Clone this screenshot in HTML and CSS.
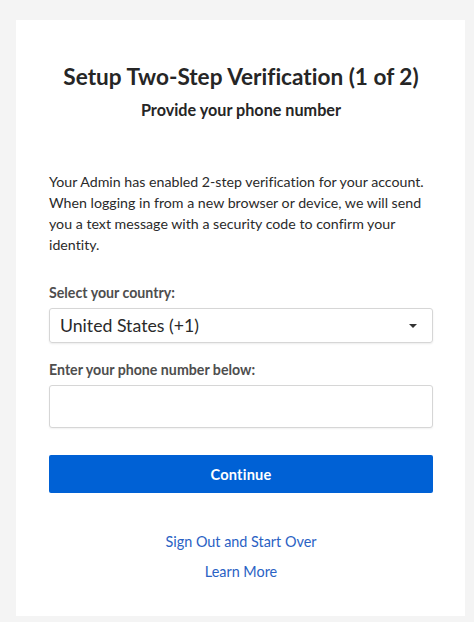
FILE: index.html
```html
<!DOCTYPE html>
<html lang="en">
<head>
<meta charset="utf-8">
<title>Setup Two-Step Verification</title>
<link rel="stylesheet" href="styles.css">
</head>
<body>
<main class="card">
  <h1 class="title">Setup Two-Step Verification (1 of 2)</h1>
  <h2 class="subtitle">Provide your phone number</h2>
  <p class="intro">Your Admin has enabled 2-step verification for your account. When logging in from a new browser or device, we will send you a text message with a security code to confirm your identity.</p>
  <label class="label label-country">Select your country:</label>
  <div class="select">
    <span class="select-value">United States (+1)</span>
    <span class="caret"></span>
  </div>
  <label class="label label-phone" for="phone">Enter your phone number below:</label>
  <input class="phone" id="phone" type="tel">
  <button class="continue" type="button">Continue</button>
  <nav class="links">
    <a class="link" href="#">Sign Out and Start Over</a>
    <a class="link" href="#">Learn More</a>
  </nav>
</main>
</body>
</html>
```
FILE: styles.css
```css
* { box-sizing: border-box; }
html, body { margin: 0; padding: 0; }
body {
  background: #f4f4f4;
  font-family: Lato, "Noto Sans", sans-serif;
  font-variant-ligatures: none;
  color: #222;
  padding: 20px 9px 6px 16px;
}
.card {
  background: #fff;
  width: 449px;
  height: 596px;
  padding: 44px 32px 0 33px;
  display: flex;
  flex-direction: column;
}
.title {
  margin: 0;
  font-size: 22.6px;
  line-height: 26px;
  font-weight: 700;
  text-align: center;
  color: #262626;
}
.subtitle {
  margin: 10px 0 0;
  font-size: 16.2px;
  line-height: 20px;
  font-weight: 700;
  text-align: center;
  color: #262626;
}
.intro {
  margin: 51px 0 0;
  font-size: 14.2px;
  line-height: 21px;
  color: #2a2a2a;
}
.label {
  display: block;
  font-size: 14.2px;
  line-height: 20px;
  font-weight: 700;
  color: #4e4e4e;
}
.label-country { margin-top: 28px; }
.label-phone { margin-top: 17px; }
.select {
  margin-top: 5px;
  height: 35px;
  border: 1px solid #d6d6d6;
  border-radius: 3px;
  box-shadow: 0 1px 2px rgba(0,0,0,0.08);
  display: flex;
  align-items: center;
  justify-content: space-between;
  padding: 0 15px 0 10px;
}
.select-value {
  font-size: 17.7px;
  color: #2a2a2a;
}
.caret {
  width: 0;
  height: 0;
  border-left: 4px solid transparent;
  border-right: 4px solid transparent;
  border-top: 4px solid #333;
}
.phone {
  margin-top: 5px;
  height: 43px;
  width: 100%;
  border: 1px solid #d6d6d6;
  border-radius: 3px;
  box-shadow: 0 1px 2px rgba(0,0,0,0.06);
  font: inherit;
  padding: 0 10px;
  outline: none;
  background: #fff;
}
.continue {
  margin-top: 27px;
  height: 38px;
  width: 100%;
  border: none;
  border-radius: 2px;
  background: #0061d5;
  color: #fff;
  font-family: Lato, "Noto Sans", sans-serif;
  font-variant-ligatures: none;
  font-size: 14.6px;
  font-weight: 700;
  letter-spacing: 0.2px;
}
.links {
  margin-top: 39px;
  display: flex;
  flex-direction: column;
  align-items: center;
  gap: 10px;
}
.link {
  font-size: 14.4px;
  line-height: 20px;
  color: #2a62c4;
  text-decoration: none;
}
```
